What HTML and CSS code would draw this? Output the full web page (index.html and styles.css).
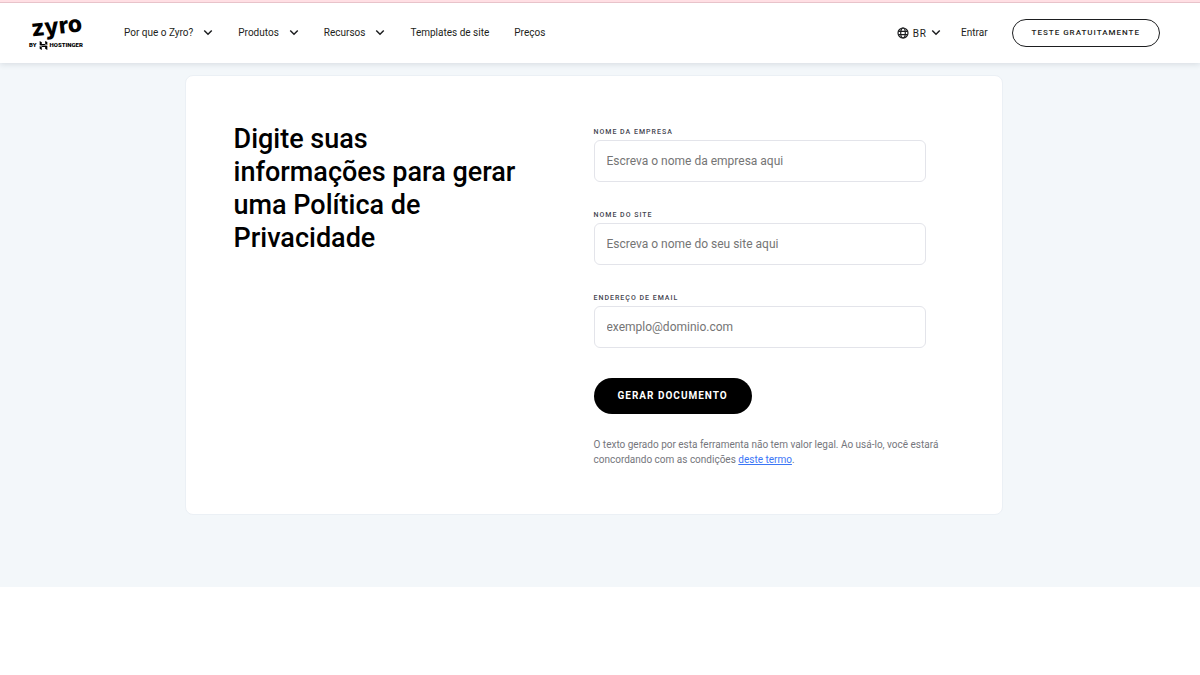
FILE: index.html
```html
<!DOCTYPE html>
<html lang="pt-BR">
<head>
<meta charset="utf-8">
<meta name="viewport" content="width=device-width, initial-scale=1">
<title>Zyro</title>
<link rel="stylesheet" href="styles.css">
</head>
<body>
<header class="header">
  <a class="logo" href="#">
    <span class="logo-name">zyro</span>
    <span class="logo-by">
      <span>BY</span>
      <svg class="logo-mark" viewBox="0 0 24 24" aria-hidden="true"><path d="M16.415 0v7.160l5.785 3.384V2.949L16.415 0zM1.800 0v11.237h18.815L14.890 8.090l-7.457-.003V3.024L1.800 0zm14.615 20.894v-5.019l-7.514-.005-5.820-3.197 19.119.091V24l-5.785-3.106zM1.800 13.551v7.343l5.633 2.949v-6.988L1.800 13.551z"/></svg>
      <span>HOSTINGER</span>
    </span>
  </a>
  <nav class="nav">
    <button class="nav-item" type="button">Por que o Zyro?<svg class="chevron" viewBox="0 0 8 6" aria-hidden="true"><path d="M1 1l3 3 3-3"/></svg></button>
    <button class="nav-item" type="button">Produtos<svg class="chevron" viewBox="0 0 8 6" aria-hidden="true"><path d="M1 1l3 3 3-3"/></svg></button>
    <button class="nav-item" type="button">Recursos<svg class="chevron" viewBox="0 0 8 6" aria-hidden="true"><path d="M1 1l3 3 3-3"/></svg></button>
    <a class="nav-item" href="#">Templates de site</a>
    <a class="nav-item" href="#">Preços</a>
  </nav>
  <div class="actions">
    <button class="language" type="button"><svg class="globe" viewBox="0 0 12 12" aria-hidden="true"><circle cx="6" cy="6" r="5"/><ellipse cx="6" cy="6" rx="2.300" ry="5"/><path d="M1.300 4.300h9.400M1.300 7.700h9.400"/></svg><span>BR</span><svg class="chevron" viewBox="0 0 8 6" aria-hidden="true"><path d="M1 1l3 3 3-3"/></svg></button>
    <a class="nav-item" href="#">Entrar</a>
    <a class="trial" href="#">TESTE GRATUITAMENTE</a>
  </div>
</header>
<main class="main">
  <section class="card">
    <h1 class="title">Digite suas informações para gerar uma Política de Privacidade</h1>
    <form class="form">
      <div class="field">
        <label class="label" for="company">NOME DA EMPRESA</label>
        <input class="input" id="company" type="text" placeholder="Escreva o nome da empresa aqui">
      </div>
      <div class="field">
        <label class="label" for="site">NOME DO SITE</label>
        <input class="input" id="site" type="text" placeholder="Escreva o nome do seu site aqui">
      </div>
      <div class="field">
        <label class="label" for="email">ENDEREÇO DE EMAIL</label>
        <input class="input" id="email" type="email" placeholder="exemplo@dominio.com">
      </div>
      <button class="submit" type="button">GERAR DOCUMENTO</button>
      <p class="note">O texto gerado por esta ferramenta não tem valor legal. Ao usá-lo, você estará concordando com as condições <a class="link" href="#">deste termo</a>.</p>
    </form>
  </section>
</main>
</body>
</html>
```
FILE: styles.css
```css
* {
  box-sizing: border-box;
}

body {
  margin: 0;
  background: #fff;
  color: #1d1e20;
  font-family: Roboto, "Liberation Sans", sans-serif;
  font-size: 10px;
}

button {
  border: 0;
  padding: 0;
  background: none;
  color: inherit;
  font: inherit;
}

a {
  color: inherit;
  text-decoration: none;
}

.header {
  position: relative;
  display: flex;
  align-items: center;
  height: 63px;
  padding: 1px 40px 0 29px;
  border-top: 2px solid #ffdfe4;
  background: #fff;
  box-shadow: inset 0 1px #e8c3ca, 0 1px 6px rgba(30, 45, 65, 0.14);
}

.logo {
  display: flex;
  flex-direction: column;
  align-items: center;
  width: 54px;
  margin-right: 41px;
  padding-bottom: 4px;
  color: #000;
}

.logo-name {
  font-family: Inter, sans-serif;
  font-size: 23px;
  font-weight: 800;
  line-height: 28px;
  transform: rotate(-6deg);
}

.logo-by {
  display: flex;
  align-items: center;
  gap: 2px;
  font-family: Roboto, sans-serif;
  font-size: 6px;
  font-weight: 900;
  line-height: 10px;
}

.logo-mark {
  width: 9px;
  height: 9px;
}

.nav,
.actions {
  display: flex;
  align-items: center;
}

.nav {
  gap: 25px;
}

.nav-item {
  display: flex;
  align-items: center;
  gap: 10px;
  line-height: 16px;
  white-space: nowrap;
}

.chevron {
  width: 10px;
  height: 8px;
  fill: none;
  stroke: #1d1e20;
  stroke-width: 1.2;
}

.actions {
  gap: 20px;
  margin-left: auto;
}

.language {
  display: flex;
  align-items: center;
  gap: 4px;
  letter-spacing: 1px;
}

.globe {
  width: 12px;
  height: 12px;
  fill: none;
  stroke: #1d1e20;
  stroke-width: 1.2;
}

.trial {
  margin-left: 4px;
  padding: 0 19px;
  border: 1px solid #1d1e20;
  border-radius: 14px;
  font-size: 8px;
  font-weight: 500;
  letter-spacing: 1px;
  line-height: 26px;
}

.main {
  padding: 12px 13px 72px 0;
  background: #f3f7fa;
}

.card {
  display: grid;
  grid-template-columns: 1fr 1fr;
  max-width: 818px;
  margin: 0 auto;
  padding: 47px 48px;
  border: 1px solid #ebf0f5;
  border-radius: 8px;
  background: #fff;
}

.title {
  max-width: 290px;
  margin: 0;
  color: #000;
  font-size: 27px;
  font-weight: 500;
  line-height: 33px;
}

.form {
  padding-top: 4px;
}

.field {
  display: flex;
  flex-direction: column;
  max-width: 332px;
  margin-bottom: 28px;
}

.label {
  margin-bottom: 3px;
  color: #444550;
  font-size: 7px;
  font-weight: 500;
  letter-spacing: 1px;
  line-height: 10px;
}

.input {
  width: 100%;
  height: 42px;
  padding: 0 12px;
  border: 1px solid #e3e4ea;
  border-radius: 6px;
  background: #fff;
  color: #1d1e20;
  font: 12px Roboto, "Liberation Sans", sans-serif;
}

.input::placeholder {
  color: #757575;
}

.submit {
  margin-top: 2px;
  padding: 0 24px;
  border-radius: 18px;
  background: #000;
  color: #fff;
  font-size: 10px;
  font-weight: 700;
  letter-spacing: 1px;
  line-height: 36px;
}

.note {
  margin: 23px 0 0;
  color: #75767c;
  font-size: 10px;
  line-height: 15px;
}

.link {
  color: #3b76f6;
  text-decoration: underline;
}
```
